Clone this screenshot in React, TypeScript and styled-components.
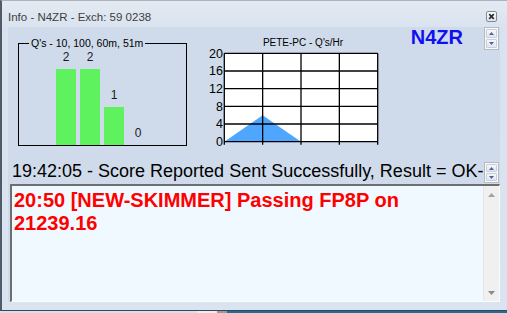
import React from "react";
import styled, { createGlobalStyle } from "styled-components";

const Global = createGlobalStyle`
  html, body { margin: 0; padding: 0; width: 507px; height: 313px; overflow: hidden; background: #d7e1ec; }
  #root { width: 507px; height: 313px; }
  * { box-sizing: border-box; }
`;

const Page = styled.div`
  width: 507px;
  height: 313px;
  display: flex;
  flex-direction: column;
  font-family: "Liberation Sans", Arial, sans-serif;
`;

const Window = styled.div`
  width: 507px;
  height: 311px;
  display: flex;
  flex-direction: column;
  background: linear-gradient(to bottom, #e3eaf2 0px, #d9e3ef 27px, #dae4f0 100%);
  border-left: 2px solid #505b67;
  border-top: 1px solid #aab4bf;
  border-bottom: 1px solid #3b4651;
  padding: 0 7px 8px 6px;
`;

const TitleBar = styled.div`
  height: 26px;
  display: flex;
  align-items: flex-start;
  justify-content: space-between;
  flex-shrink: 0;
`;

const TitleText = styled.div`
  font-size: 11.5px;
  line-height: 14px;
  padding-top: 9px;
  color: #3e3e3e;
`;

const CloseButton = styled.div`
  width: 11px;
  height: 11px;
  margin-top: 10px;
  margin-right: 3px;
  display: flex;
`;

const Client = styled.div`
  flex: 1;
  display: flex;
  flex-direction: column;
  background: #cfdbeb;
  min-height: 0;
`;

const TopSection = styled.div`
  height: 133px;
  display: flex;
  align-items: flex-start;
  flex-shrink: 0;
`;

const Group = styled.fieldset`
  margin: 10px 0 0 10px;
  padding: 0;
  width: 169px;
  min-width: 0;
  border: 1px solid #000;
`;

const GroupLegend = styled.legend`
  margin-left: 10px;
  padding: 0 2px;
  font-size: 10.5px;
  line-height: 12px;
  color: #000;
`;

const Bars = styled.div`
  height: 96px;
  display: flex;
  align-items: flex-end;
  padding-left: 37px;
  gap: 4px;
`;

const BarColumn = styled.div`
  width: 20px;
  display: flex;
  flex-direction: column;
  align-items: center;
`;

const BarLabel = styled.div`
  font-size: 12px;
  line-height: 14px;
  margin-bottom: 5px;
  color: #1a1a1a;
`;

const Bar = styled.div<{ $h: number }>`
  width: 20px;
  height: ${(p) => p.$h}px;
  background: #5ef25e;
`;

const ChartBlock = styled.div`
  margin: 10px 0 0 13px;
  width: 182px;
  display: flex;
  flex-direction: column;
`;

const ChartTitle = styled.div`
  font-size: 10px;
  line-height: 11px;
  text-align: center;
  padding-left: 24px;
  color: #000;
`;

const ChartSvg = styled.svg`
  display: block;
  width: 182px;
  height: 100px;
  font-family: "Liberation Sans", Arial, sans-serif;
`;

const CallSign = styled.div`
  margin-left: auto;
  font-size: 20px;
  line-height: 20px;
  font-weight: bold;
  color: #1010f0;
`;

const Spin = styled.div<{ $h: number; $top: number }>`
  width: 15px;
  height: ${(p) => p.$h}px;
  margin-top: ${(p) => p.$top}px;
  margin-right: 1px;
  flex-shrink: 0;
  display: flex;
  flex-direction: column;
  border: 1px solid #b4bbc5;
  background: #f7f8fa;
  padding: 1px;
  gap: 1px;
`;

const SpinButton = styled.div`
  flex: 1;
  display: flex;
  align-items: center;
  justify-content: center;
  border: 1px solid #c9cfd8;
  border-radius: 1px;
  background: linear-gradient(to bottom, #f5f7f9, #e2e6ec);
`;

const TopSpinWrap = styled.div`
  margin-left: 21px;
  display: flex;
`;

const StatusRow = styled.div`
  height: 24px;
  display: flex;
  align-items: flex-start;
  flex-shrink: 0;
`;

const StatusText = styled.div`
  flex: 1;
  min-width: 0;
  overflow: hidden;
  white-space: nowrap;
  font-size: 18px;
  line-height: 22px;
  padding-left: 4px;
  color: #000;
`;

const TextBox = styled.div`
  flex: 1;
  min-height: 0;
  margin-left: 2px;
  display: flex;
  background: #f0f9ff;
  border-top: 2px solid #6e6e6e;
  border-left: 2px solid #6e6e6e;
  border-bottom: 1px solid #fbfbfb;
  border-right: 1px solid #fbfbfb;
`;

const Message = styled.div`
  flex: 1;
  padding: 3px 10px 0 2px;
  font-size: 20px;
  line-height: 23px;
  font-weight: bold;
  color: #ff0000;
`;

const ScrollBar = styled.div`
  width: 16px;
  display: flex;
  flex-direction: column;
  justify-content: space-between;
  background: #f0f0f0;
  border-left: 1px solid #e6e6e6;
`;

const ScrollArrow = styled.div`
  height: 17px;
  display: flex;
  align-items: center;
  justify-content: center;
`;

const BottomStrip = styled.div`
  height: 2px;
  background: linear-gradient(to right, #d7e1ec 0, #d7e1ec 197px, #eeeeee 197px, #eeeeee 217px, #9a9a9a 217px, #9a9a9a 227px, #1d6f98 227px);
`;

const Tri = ({ up, color, w = 5, h = 3 }: { up: boolean; color: string; w?: number; h?: number }) => (
  <svg width={w} height={h} viewBox={`0 0 ${w} ${h}`}>
    <polygon points={up ? `0,${h} ${w},${h} ${w / 2},0` : `0,0 ${w},0 ${w / 2},${h}`} fill={color} />
  </svg>
);

const SpinControl = ({ h, top }: { h: number; top: number }) => (
  <Spin $h={h} $top={top}>
    <SpinButton>
      <Tri up color="#4b62a0" />
    </SpinButton>
    <SpinButton>
      <Tri up={false} color="#4b62a0" />
    </SpinButton>
  </Spin>
);

const bars = [2, 2, 1, 0];

const Chart = () => {
  const left = 24.3;
  const right = 177.7;
  const top = 5.3;
  const bottom = 93.7;
  const cols = 4;
  const rows = 5;
  const cw = (right - left) / cols;
  const rh = (bottom - top) / rows;
  const labels = [20, 16, 12, 8, 4, 0];
  const yFor = (v: number) => bottom - (v / 20) * (bottom - top);
  return (
    <ChartSvg viewBox="0 0 182 100">
      <rect x={left} y={top} width={right - left} height={bottom - top} fill="#fff" />
      <polygon
        points={`${left},${bottom} ${left + cw},${yFor(6)} ${left + 2 * cw},${bottom}`}
        fill="#4fa6ff"
      />
      {Array.from({ length: cols + 1 }, (_, i) => (
        <line key={"v" + i} x1={left + i * cw} x2={left + i * cw} y1={top} y2={bottom + 3} stroke="#000" strokeWidth={1.3} />
      ))}
      {Array.from({ length: rows + 1 }, (_, i) => (
        <line key={"h" + i} x1={left} x2={right} y1={top + i * rh} y2={top + i * rh} stroke="#000" strokeWidth={1.3} />
      ))}
      {labels.map((l, i) => (
        <text key={l} x={23} y={top + i * rh + 4.3} fontSize={12.5} textAnchor="end" fill="#000">
          {l}
        </text>
      ))}
    </ChartSvg>
  );
};

export default function App() {
  return (
    <Page>
      <Global />
      <Window>
        <TitleBar>
          <TitleText>Info - N4ZR - Exch: 59 0238</TitleText>
          <CloseButton>
            <svg width="11" height="11" viewBox="0 0 11 11">
              <defs>
                <linearGradient id="cb" x1="0" y1="0" x2="0" y2="1">
                  <stop offset="0" stopColor="#fbfcfd" />
                  <stop offset="1" stopColor="#dfe4ea" />
                </linearGradient>
              </defs>
              <rect x="0.5" y="0.5" width="10" height="10" rx="1.5" fill="url(#cb)" stroke="#7f8a98" />
              <path d="M3.2 3.2 L7.8 7.8 M7.8 3.2 L3.2 7.8" stroke="#2e2e2e" strokeWidth="1.7" />
            </svg>
          </CloseButton>
        </TitleBar>
        <Client>
          <TopSection>
            <Group>
              <GroupLegend>Q's - 10, 100, 60m, 51m</GroupLegend>
              <Bars>
                {bars.map((b, i) => (
                  <BarColumn key={i}>
                    <BarLabel>{b}</BarLabel>
                    <Bar $h={b * 38} />
                  </BarColumn>
                ))}
              </Bars>
            </Group>
            <ChartBlock>
              <ChartTitle>PETE-PC - Q's/Hr</ChartTitle>
              <Chart />
            </ChartBlock>
            <CallSign>N4ZR</CallSign>
            <TopSpinWrap>
              <SpinControl h={23} top={0} />
            </TopSpinWrap>
          </TopSection>
          <StatusRow>
            <StatusText>19:42:05 - Score Reported Sent Successfully, Result = OK-</StatusText>
            <SpinControl h={21} top={2} />
          </StatusRow>
          <TextBox>
            <Message>20:50 [NEW-SKIMMER] Passing FP8P on 21239.16</Message>
            <ScrollBar>
              <ScrollArrow>
                <Tri up color="#a2a2a2" w={7} h={4} />
              </ScrollArrow>
              <ScrollArrow>
                <Tri up={false} color="#8a8a8a" w={7} h={4} />
              </ScrollArrow>
            </ScrollBar>
          </TextBox>
        </Client>
      </Window>
      <BottomStrip />
    </Page>
  );
}
